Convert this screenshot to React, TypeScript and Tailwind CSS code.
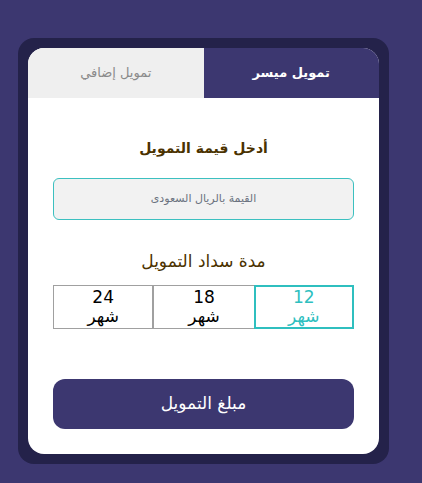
import React from "react";

export default function App() {
  const font = { fontFamily: '"DejaVu Sans", "Noto Sans", sans-serif' };
  return (
    <div className="w-[422px] h-[483px] bg-[#3c3770] pt-[38px] pl-[18px]" style={font}>
      <div dir="rtl" className="w-[371px] h-[426px] bg-[#24224a] rounded-[16px] p-[10px]">
        <div className="w-[351px] h-[406px] bg-white rounded-[16px] overflow-hidden flex flex-col">
          <div className="flex h-[50px]">
            <div className="flex-1 bg-[#3c3770] flex items-center justify-center text-white text-[13px] font-bold">تمويل ميسر</div>
            <div className="flex-1 bg-[#efefef] flex items-center justify-center text-[#8a8a8a] text-[13px]">تمويل إضافي</div>
          </div>
          <div className="flex flex-col items-center px-[25px]">
            <div className="mt-[38px] text-[#4b3200] text-[14px] font-bold leading-[24px]">أدخل قيمة التمويل</div>
            <div className="mt-[18px] w-full h-[42px] bg-[#f2f2f2] border border-[#3cc0c0] rounded-[6px] flex items-center justify-center text-[#6b7280] text-[11px]">
              القيمة بالريال السعودى
            </div>
            <div className="mt-[30px] text-[#4b3200] text-[17px] leading-[22px]">مدة سداد التمويل</div>
            <div className="mt-[13px] w-full grid grid-cols-3 h-[44px]">
              <div className="border-2 border-[#2fbfbf] flex flex-col items-center justify-center text-[#2fbfbf] leading-none">
                <span className="text-[17px]">12</span>
                <span className="text-[17px] mt-[2px]">شهر</span>
              </div>
              <div className="border border-[#a0a0a0] border-r-0 flex flex-col items-center justify-center text-black leading-none">
                <span className="text-[17px]">18</span>
                <span className="text-[17px] mt-[2px]">شهر</span>
              </div>
              <div className="border border-[#a0a0a0] flex flex-col items-center justify-center text-black leading-none">
                <span className="text-[17px]">24</span>
                <span className="text-[17px] mt-[2px]">شهر</span>
              </div>
            </div>
            <div className="mt-[50px] w-full h-[50px] bg-[#3c3770] rounded-[12px] flex items-center justify-center text-white text-[17px]">
              مبلغ التمويل
            </div>
          </div>
        </div>
      </div>
    </div>
  );
}
